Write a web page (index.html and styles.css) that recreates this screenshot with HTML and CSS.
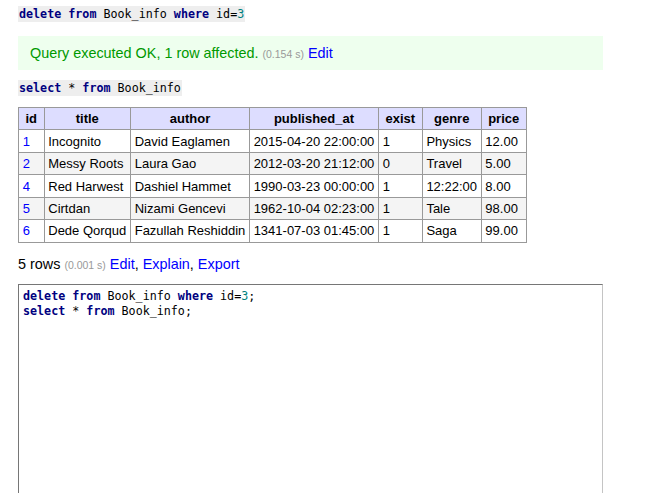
FILE: index.html
```html
<!DOCTYPE html>
<html>
<head>
<meta charset="utf-8">
<link rel="stylesheet" href="styles.css">
</head>
<body>
<div class="page">
  <p class="sql"><code class="jush"><b>delete</b> <b>from</b> Book_info <b>where</b> id=<span class="num">3</span></code></p>
  <div class="message">Query executed OK, 1 row affected. <span class="time">(0.154 s)</span> <a href="#">Edit</a></div>
  <p class="sql sql2"><code class="jush"><b>select</b> * <b>from</b> Book_info</code></p>
  <table class="result">
    <thead>
      <tr><th>id</th><th>title</th><th>author</th><th>published_at</th><th>exist</th><th>genre</th><th>price</th></tr>
    </thead>
    <tbody>
      <tr><td><a href="#">1</a></td><td>Incognito</td><td>David Eaglamen</td><td>2015-04-20 22:00:00</td><td>1</td><td>Physics</td><td>12.00</td></tr>
      <tr><td><a href="#">2</a></td><td>Messy Roots</td><td>Laura Gao</td><td>2012-03-20 21:12:00</td><td>0</td><td>Travel</td><td>5.00</td></tr>
      <tr><td><a href="#">4</a></td><td>Red Harwest</td><td>Dashiel Hammet</td><td>1990-03-23 00:00:00</td><td>1</td><td>12:22:00</td><td>8.00</td></tr>
      <tr><td><a href="#">5</a></td><td>Cirtdan</td><td>Nizami Gencevi</td><td>1962-10-04 02:23:00</td><td>1</td><td>Tale</td><td>98.00</td></tr>
      <tr><td><a href="#">6</a></td><td>Dede Qorqud</td><td>Fazullah Reshiddin</td><td>1341-07-03 01:45:00</td><td>1</td><td>Saga</td><td>99.00</td></tr>
    </tbody>
  </table>
  <p class="rows">5 rows <span class="time">(0.001 s)</span> <a href="#">Edit</a>, <a href="#">Explain</a>, <a href="#">Export</a></p>
  <div class="editor"><pre class="jush"><b>delete</b> <b>from</b> Book_info <b>where</b> id=<span class="num">3</span>;
<b>select</b> * <b>from</b> Book_info;</pre></div>
</div>
</body>
</html>
```

FILE: styles.css
```css
html, body {
  margin: 0;
  padding: 0;
  background: #fff;
}
body {
  font-family: "Liberation Sans", Arial, sans-serif;
  font-size: 14.4px;
  color: #000;
}
.page {
  display: flex;
  flex-direction: column;
  align-items: flex-start;
  padding: 5px 0 0 18px;
  width: 585px;
}
a {
  color: #00f;
  text-decoration: none;
}
p {
  margin: 0;
}
.jush {
  font-family: "DejaVu Sans Mono", monospace;
  font-size: 11.7px;
  color: #000;
}
.jush b {
  color: #000080;
  font-weight: bold;
}
.jush .num {
  color: #007f7f;
}
.sql {
  line-height: 16px;
  height: 16px;
}
.sql code {
  display: inline-block;
  background: #eee;
  line-height: 16px;
  padding: 0 1px 0 1px;
}
.message {
  margin-top: 15px;
  align-self: stretch;
  background: #efe;
  color: #090;
  padding: 9px 12px 7px;
  line-height: 17px;
}
.time {
  color: #999;
  font-size: 10.5px;
}
.sql2 {
  margin-top: 9px;
}
.result {
  margin-top: 12px;
  border-collapse: collapse;
  font-size: 13px;
  line-height: 1.25;
  border: 1px solid #999;
}
.result th, .result td {
  border: 1px solid #999;
  text-align: left;
  padding: 3.2px 3.7px 2px;
  white-space: nowrap;
}
.result th {
  background: #ddf;
  font-weight: bold;
  text-align: center;
  padding: 3.2px 6.5px 2px;
}
.result tbody tr:nth-child(2n) {
  background: #f4f4f4;
}
.rows {
  margin-top: 13px;
  line-height: 17px;
}
.editor {
  margin-top: 10px;
  align-self: stretch;
  height: 260px;
  border-style: solid;
  border-width: 1px;
  border-color: #767676 #c4c4c4 #c4c4c4 #767676;
  padding: 4px 4px;
}
.editor pre {
  margin: 0;
  line-height: 15px;
}
```
